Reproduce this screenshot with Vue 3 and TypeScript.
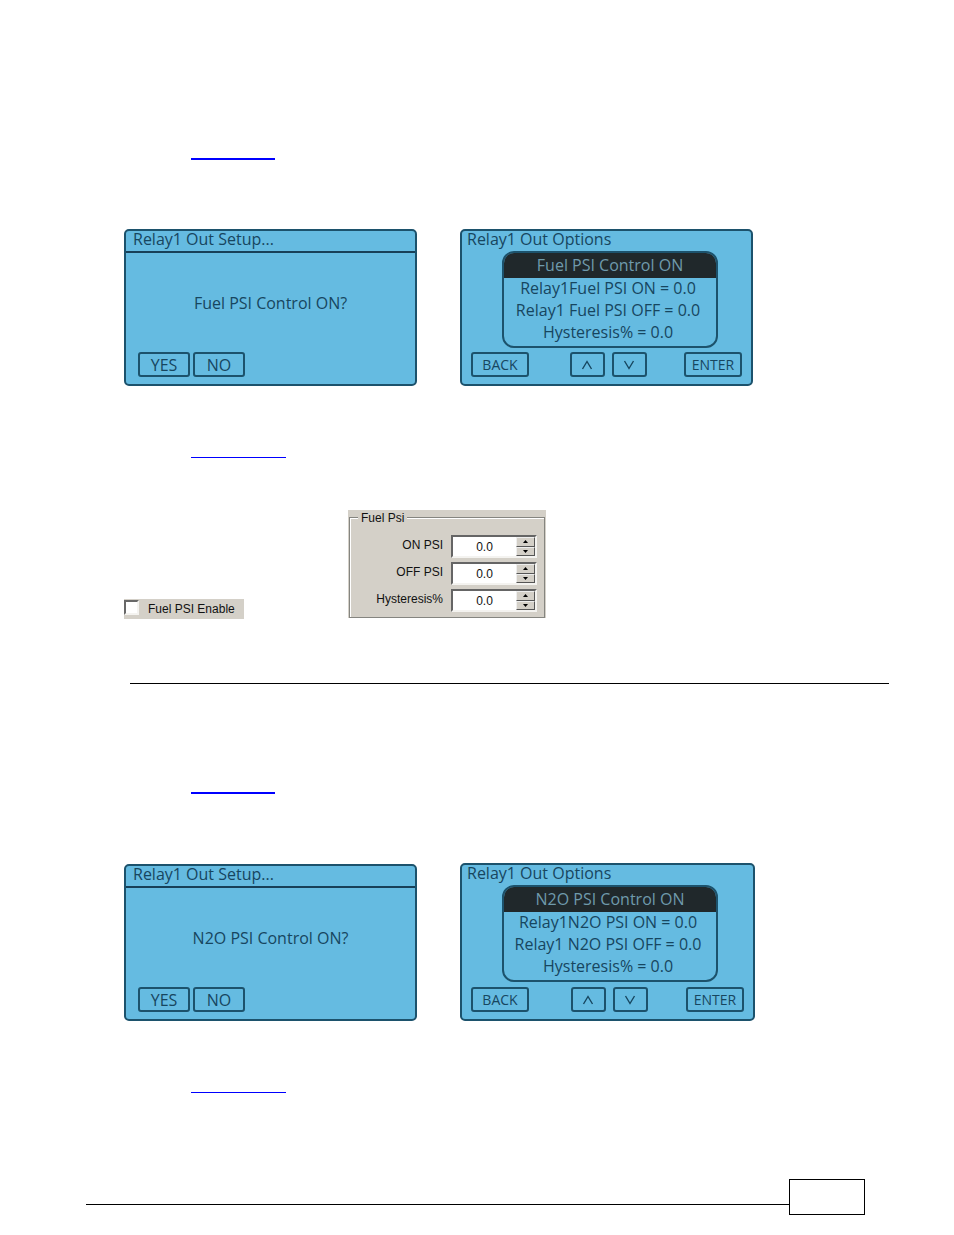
<script setup lang="ts">
import { ref } from 'vue'

interface RelaySection {
  id: string
  name: string
  panel: boolean
}

interface PsiField {
  id: string
  label: string
  value: string
}

const sections: RelaySection[] = [
  { id: 'fuel', name: 'Fuel', panel: true },
  { id: 'n2o', name: 'N2O', panel: false },
]

const fields = ref<PsiField[]>([
  { id: 'on-psi', label: 'ON PSI', value: '0.0' },
  { id: 'off-psi', label: 'OFF PSI', value: '0.0' },
  { id: 'hysteresis', label: 'Hysteresis%', value: '0.0' },
])

const enabled = ref(false)

function step(field: PsiField, amount: number): void {
  field.value = Math.max(0, Number(field.value) + amount).toFixed(1)
}
</script>

<template>
  <div class="page">
    <main class="content">
      <section v-for="s in sections" :key="s.id" class="section" :class="s.id">
        <div class="rule thick"></div>
        <div class="screens">
          <div class="screen setup">
            <div class="setup-title">Relay1 Out Setup...</div>
            <div class="prompt">{{ s.name }} PSI Control ON?</div>
            <div class="keys">
              <button type="button" class="key yes-no">YES</button>
              <button type="button" class="key yes-no">NO</button>
            </div>
          </div>
          <div class="screen options">
            <div class="options-title">Relay1 Out Options</div>
            <ul class="menu">
              <li class="selected">{{ s.name }} PSI Control ON</li>
              <li>Relay1{{ s.name }} PSI ON = 0.0</li>
              <li>Relay1 {{ s.name }} PSI OFF = 0.0</li>
              <li>Hysteresis% = 0.0</li>
            </ul>
            <div class="keys spread">
              <button type="button" class="key wide">BACK</button>
              <div class="arrows">
                <button type="button" class="key arrow">
                  <svg width="12" height="10" viewBox="0 0 12 10"><path d="M1.5 9 6 1.5 10.5 9" /></svg>
                </button>
                <button type="button" class="key arrow">
                  <svg width="12" height="10" viewBox="0 0 12 10"><path d="M1.5 1 6 8.5 10.5 1" /></svg>
                </button>
              </div>
              <button type="button" class="key wide">ENTER</button>
            </div>
          </div>
        </div>
        <div class="rule thin"></div>
        <div v-if="s.panel" class="software">
          <label class="enable">
            <input v-model="enabled" type="checkbox" />
            <span>Fuel PSI Enable</span>
          </label>
          <div class="group">
            <fieldset>
              <legend>Fuel Psi</legend>
              <div v-for="f in fields" :key="f.id" class="row">
                <label :for="f.id">{{ f.label }}</label>
                <div class="spinner">
                  <input :id="f.id" v-model="f.value" type="text" />
                  <div class="steps">
                    <button type="button" @click="step(f, 0.1)">
                      <svg width="5" height="3" viewBox="0 0 5 3"><path d="M0 3 2.5 0 5 3Z" /></svg>
                    </button>
                    <button type="button" @click="step(f, -0.1)">
                      <svg width="5" height="3" viewBox="0 0 5 3"><path d="M0 0 2.5 3 5 0Z" /></svg>
                    </button>
                  </div>
                </div>
              </div>
            </fieldset>
          </div>
        </div>
        <hr v-if="s.panel" class="divider" />
      </section>
    </main>
    <footer class="footer">
      <div class="footer-line"></div>
      <div class="page-box"></div>
    </footer>
  </div>
</template>

<style>
body {
  margin: 0;
  background: #fff;
}
</style>

<style scoped>
* {
  box-sizing: border-box;
}

.page {
  display: flex;
  flex-direction: column;
  min-height: 100vh;
  padding-bottom: 20px;
  font-family: "Open Sans", "Noto Sans", sans-serif;
}

.content {
  flex: 1;
  padding: 158px 65px 0 124px;
}

.rule {
  margin-left: 67px;
  background: #00f;
}

.thick {
  width: 84px;
  height: 2px;
}

.thin {
  width: 95px;
  height: 1px;
}

.screens {
  display: grid;
  grid-template-columns: minmax(0, 293px) minmax(0, 293px);
  align-items: end;
  gap: 43px;
  margin: 69px 0 71px;
}

.n2o .screens {
  grid-template-columns: minmax(0, 293px) minmax(0, 295px);
}

.screen {
  display: flex;
  flex-direction: column;
  height: 157px;
  border: 2px solid #1c526c;
  border-radius: 5px;
  background: #65bbe1;
  color: #17465f;
  font-size: 16px;
  font-weight: 500;
  line-height: 22px;
}

.n2o .options {
  height: 158px;
}

.setup-title {
  height: 22px;
  padding-left: 7px;
  border-bottom: 2px solid #174058;
  line-height: 17px;
}

.prompt {
  flex: 1;
  padding-top: 39px;
  text-align: center;
}

.keys {
  display: flex;
  gap: 3px;
  padding: 0 0 7px 12px;
}

.key {
  height: 25px;
  padding: 0;
  border: 2px solid #1c526c;
  border-radius: 3px;
  background: transparent;
  color: #17465f;
  font: inherit;
  line-height: 20px;
}

.yes-no {
  width: 52px;
}

.options-title {
  height: 20px;
  padding-left: 5px;
  line-height: 17px;
}

.menu {
  width: 216px;
  height: 97px;
  margin: 0 34px 0 40px;
  padding: 0 4px 0 0;
  overflow: hidden;
  border: 2px solid #1c526c;
  border-radius: 12px;
  list-style: none;
  text-align: center;
}

.menu li {
  height: 22px;
  line-height: 20px;
  white-space: nowrap;
}

.menu .selected {
  height: 25px;
  margin-right: -4px;
  background: #20282b;
  color: #6f9aab;
  line-height: 24px;
}

.spread {
  justify-content: space-between;
  margin-top: auto;
  padding: 0 9px 7px 9px;
}

.wide {
  width: 58px;
  font-size: 14px;
}

.arrows {
  display: flex;
  gap: 7px;
  padding-left: 3px;
}

.arrow {
  display: flex;
  align-items: center;
  justify-content: center;
  width: 35px;
}

.arrow path {
  fill: none;
  stroke: #17465f;
  stroke-width: 1.4;
}

.software {
  display: flex;
  align-items: flex-end;
  gap: 104px;
  margin-top: 52px;
  color: #111;
  font-family: "Liberation Sans", Arial, sans-serif;
  font-size: 12px;
}

.enable {
  display: flex;
  align-items: center;
  gap: 9px;
  width: 120px;
  height: 20px;
  margin-bottom: -1px;
  background: #d4d0c8;
  white-space: nowrap;
}

.enable input {
  width: 15px;
  height: 15px;
  margin: 0 0 4px;
  appearance: none;
  border: 2px solid;
  border-color: #686868 #f4f3f0 #f4f3f0 #686868;
  background: #fff;
}

.enable input:checked {
  background: #444;
}

.group {
  width: 198px;
  height: 108px;
  padding: 1px 1px 0;
  background: #d4d0c8;
}

fieldset {
  height: 107px;
  min-width: 0;
  margin: 0;
  padding: 12px 7px 0;
  border: 1px solid #858580;
  box-shadow: inset 1px 1px #fff;
}

legend {
  height: 12px;
  margin-left: 1px;
  padding: 0 3px;
  background: #d4d0c8;
  line-height: 14px;
}

.row {
  display: flex;
  justify-content: flex-end;
  gap: 8px;
  margin-bottom: 4px;
}

.row label {
  line-height: 20px;
}

.spinner {
  display: flex;
  width: 86px;
  height: 23px;
  border: 2px solid;
  border-color: #656565 #f4f3f0 #f4f3f0 #656565;
  background: #fff;
}

.spinner input {
  flex: 1;
  min-width: 0;
  padding: 0;
  border: 0;
  background: transparent;
  color: #111;
  font: inherit;
  text-align: center;
}

.steps {
  display: flex;
  flex-direction: column;
  width: 19px;
}

.steps button {
  display: flex;
  flex: 1;
  align-items: center;
  justify-content: center;
  min-height: 0;
  padding: 0;
  border: 1px solid;
  border-color: #eee #555 #555 #eee;
  background: #d4d0c8;
}

.divider {
  height: 1px;
  margin: 65px 0 108px 6px;
  border: 0;
  background: #000;
}

.footer {
  display: flex;
  padding: 0 89px 0 86px;
}

.footer-line {
  flex: 1;
  height: 1px;
  margin-top: 25px;
  background: #000;
}

.page-box {
  width: 76px;
  height: 36px;
  border: 1px solid #000;
}
</style>
